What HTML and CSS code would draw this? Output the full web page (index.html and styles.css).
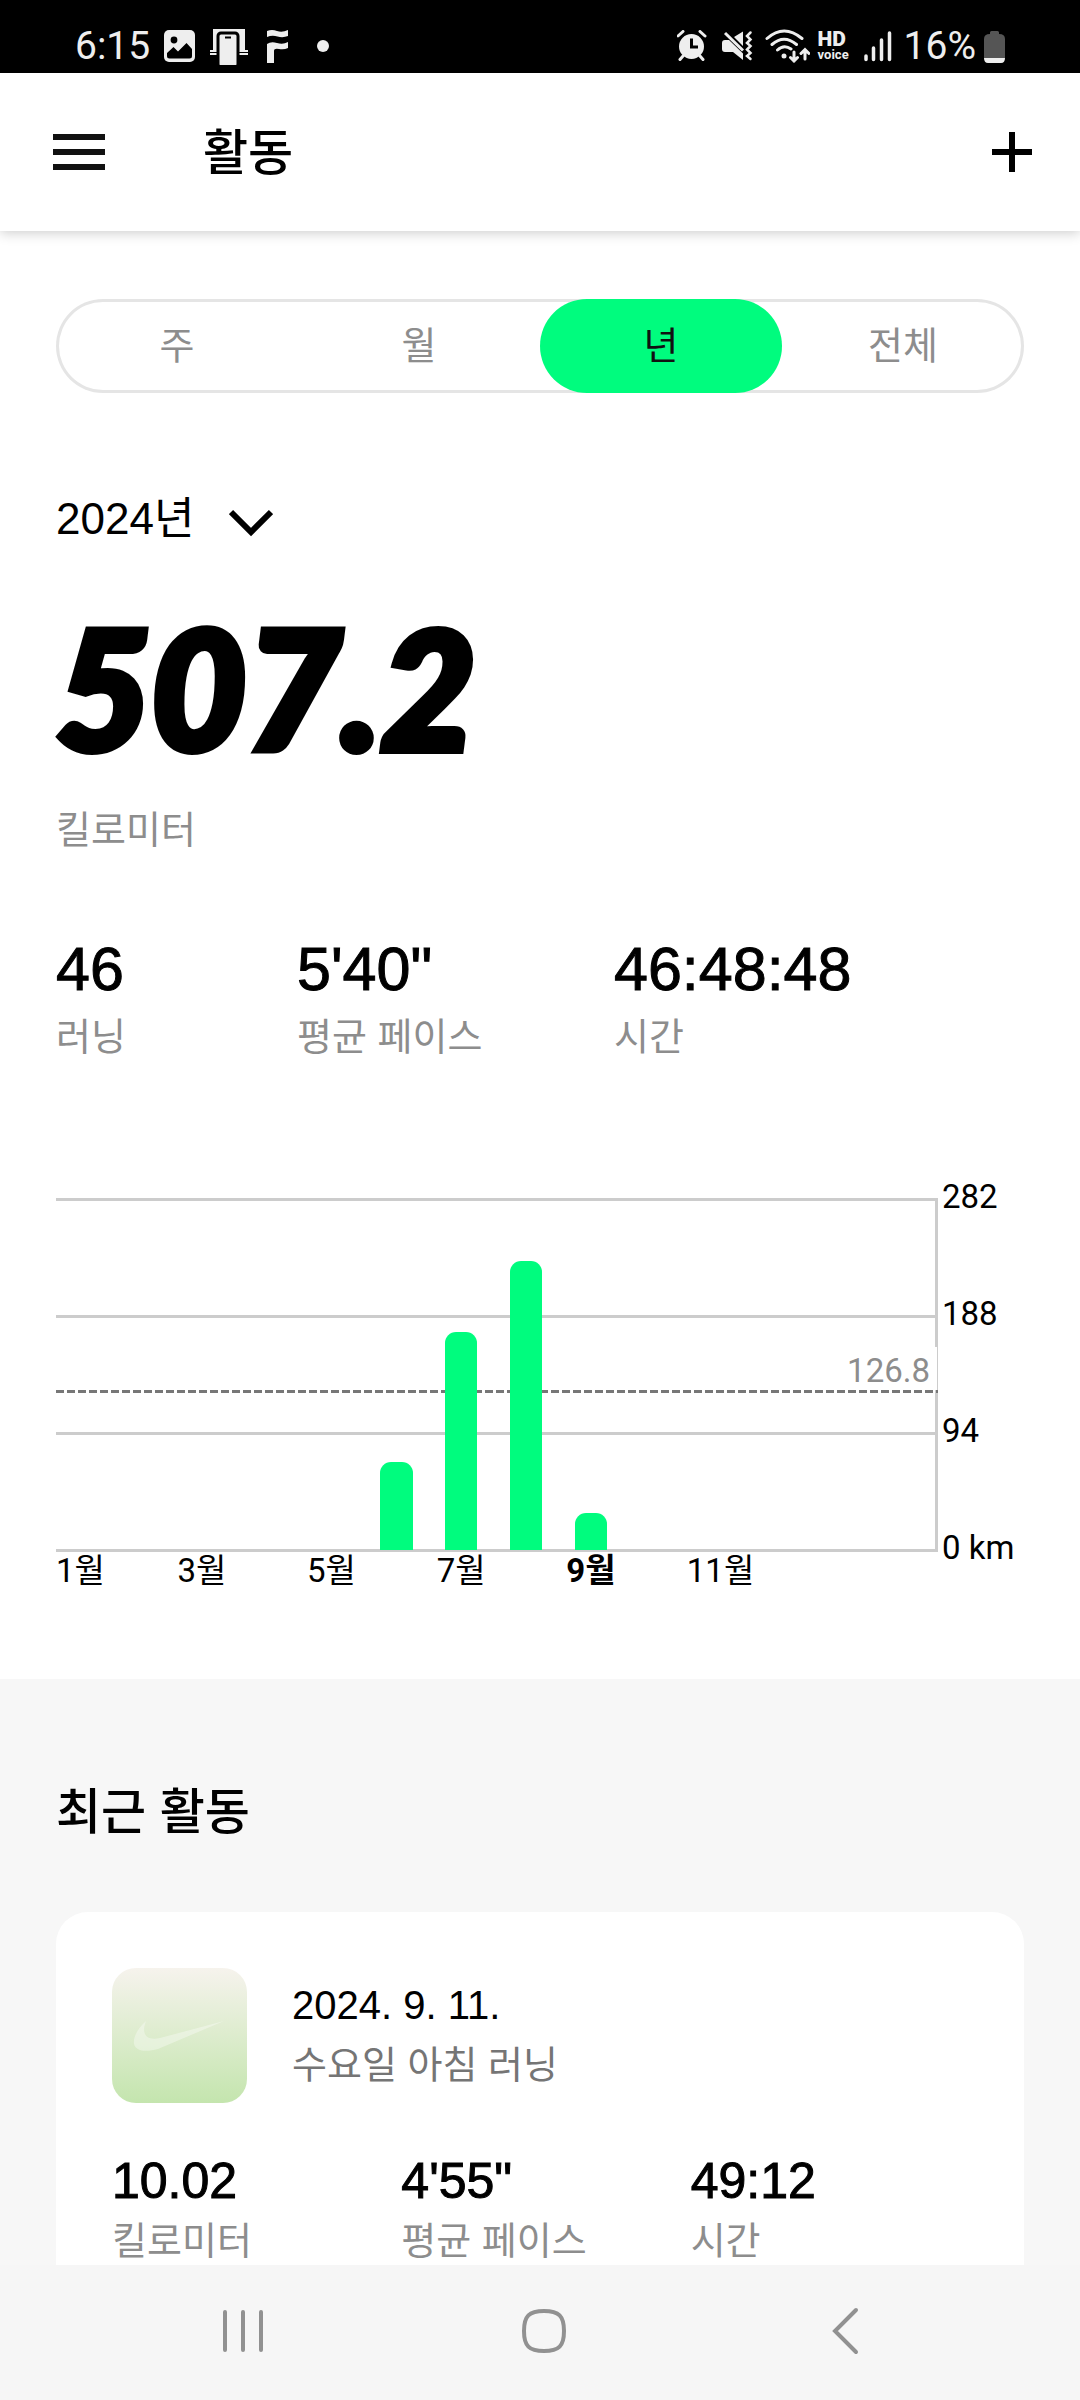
FILE: index.html
```html
<!DOCTYPE html>
<html lang="ko">
<head>
    <meta charset="UTF-8">
    <meta name="viewport" content="width=device-width, initial-scale=1.0">
    <title>활동</title>
    <link rel="stylesheet" href="styles.css">
</head>
<body>
<div class="status-bar">
    <div class="status-left">
        <span class="status-text">6:15</span>
        <svg width="31" height="32" viewBox="0 0 31 32">
            <rect width="31" height="32" rx="5" fill="#eee"/>
            <circle cx="10" cy="10" r="3.4" fill="#000"/>
            <path d="M3 23 L9.500 17 L14 21.500 L22.500 13 L28 19 V26 Q28 28.500 25.500 28.500 H5.500 Q3 28.500 3 26 Z" fill="#000"/>
        </svg>
        <svg width="40" height="37" viewBox="0 0 40 37">
            <path d="M4 1 H36 V22 H39 V27 H1 V22 H4 Z" fill="#eee"/>
            <path d="M1 24.500 H39" stroke="#000" stroke-width="1"/>
            <rect x="9" y="5" width="20" height="34" rx="3" fill="#eee" stroke="#000" stroke-width="3"/>
            <path d="M16 9.500 H22" stroke="#000" stroke-width="2"/>
        </svg>
        <svg width="26" height="35" viewBox="0 0 26 35">
            <path d="M4 2 Q9 0 14 2 T25 1 V7 Q20 9 14.500 7.500 T4 8 Z M4 15 Q8 12 14 14 T25 13 V19 Q21 21 16 20 Q11 19 11 22 V34 H4 Z" fill="#eee"/>
        </svg>
        <span class="dot"></span>
    </div>
    <div class="status-right">
        <svg width="37" height="32" viewBox="0 0 37 32">
            <circle cx="14.500" cy="16.500" r="12.500" fill="#eee"/>
            <path d="M1 6 L6 1.500 M28 6 L23 1.500 M6 26 L3 29.500 M23 26 L26 29.500" stroke="#eee" stroke-width="3" stroke-linecap="round"/>
            <path d="M14.500 8.500 V17 H21" fill="none" stroke="#000" stroke-width="3"/>
        </svg>
        <svg width="35" height="32" viewBox="0 0 35 32">
            <path d="M0 13 Q0 10 3 10 H7 L21 23.500 V30 L11 22 H3 Q0 22 0 19 Z M12 7 L21 1.500 V16 Z" fill="#eee"/>
            <path d="M3 3 L21 20.500" stroke="#eee" stroke-width="3"/>
            <path d="M28.500 2.500 L25 6 L28.500 9.500 L25 13 L28.500 16 L25 19.500 L28.500 23 L25 26 L28.500 29" fill="none" stroke="#eee" stroke-width="2.500" stroke-linecap="round"/>
        </svg>
        <svg width="45" height="34" viewBox="0 0 45 34">
            <g fill="none" stroke="#eee" stroke-width="3" stroke-linecap="round">
                <path d="M2 9.500 Q19 -5.500 37 9.500 M7 15.500 Q19 5 31.500 15.500 M12.500 21 Q19 15 26 20"/>
                <path d="M29 23 V32 M25.500 28.500 L29 32 L32.500 28.500 M40 30 V20.500 M36 24.500 L40 20.500 L44 24.500"/>
            </g>
            <circle cx="19" cy="27" r="2.500" fill="#eee"/>
        </svg>
        <span class="hd"><b>HD</b><small>voice</small></span>
        <svg width="32" height="32" viewBox="0 0 32 32">
            <path d="M2 26 V29.500 M9.500 18 V29.500 M17.500 10 V29.500 M25.500 3 V29.500" stroke="#eee" stroke-width="3.500" stroke-linecap="round"/>
        </svg>
        <span class="status-text">16%</span>
        <svg width="21" height="33" viewBox="0 0 21 33">
            <path d="M6 4 V2.500 Q6 1 7.500 1 H13.500 Q15 1 15 2.500 V4 Q21 4 21 9 V28 H0 V9 Q0 4 6 4 Z" fill="#555"/>
            <path d="M0 28 H21 Q21 33 17 33 H4 Q0 33 0 28 Z" fill="#eee"/>
        </svg>
    </div>
</div>

<header class="app-bar">
    <button class="icon-btn" aria-label="메뉴">
        <svg width="52" height="36" viewBox="0 0 52 36">
            <path d="M0 3 H52 M0 18 H52 M0 33 H52" stroke="#111" stroke-width="6"/>
        </svg>
    </button>
    <h1>활동</h1>
    <button class="icon-btn add" aria-label="추가">
        <svg width="40" height="40" viewBox="0 0 40 40">
            <path d="M20 0 V40 M0 20 H40" stroke="#000" stroke-width="6"/>
        </svg>
    </button>
</header>

<main>
    <section class="summary">
        <div class="tabs">
            <button>주</button>
            <button>월</button>
            <button class="active">년</button>
            <button>전체</button>
        </div>

        <div class="year">
            <select id="year" aria-label="연도">
                <option>2024년</option>
            </select>
            <svg width="44" height="36" viewBox="0 0 44 36">
                <path d="M2 11 L22 31 L42 11" fill="none" stroke="#000" stroke-width="6"/>
            </svg>
        </div>

        <div class="total">507.2</div>
        <div class="label">킬로미터</div>

        <div class="stats">
            <div><div class="value">46</div><div class="label">러닝</div></div>
            <div><div class="value">5'40"</div><div class="label">평균 페이스</div></div>
            <div><div class="value">46:48:48</div><div class="label">시간</div></div>
        </div>

        <div class="chart">
            <div class="plot">
                <div class="lines"><i></i><i></i><i></i><i></i></div>
                <div class="average"><span>126.8</span></div>
                <div class="bars">
                    <i></i><i></i><i></i><i></i><i></i>
                    <i style="height: 25%"></i>
                    <i style="height: 62%"></i>
                    <i style="height: 82%"></i>
                    <i style="height: 10.500%"></i>
                    <i></i><i></i><i></i>
                </div>
            </div>
            <div class="scale">
                <span>282</span>
                <span>188</span>
                <span>94</span>
                <span>0 km</span>
            </div>
            <div class="months">
                <span class="first">1월</span>
                <span>3월</span>
                <span>5월</span>
                <span>7월</span>
                <span class="now">9월</span>
                <span>11월</span>
            </div>
        </div>
    </section>

    <section class="recent">
        <h2>최근 활동</h2>
        <div class="card">
            <div class="run">
                <svg class="thumb" width="135" height="135" viewBox="0 0 135 135">
                    <path d="M34 53 C25 61 21 70 22 76 C24 84 35 84 46 81 L112 53 L48 70 C34 73 29 66 34 53 Z" fill="#fff" fill-opacity="0.35"/>
                </svg>
                <div>
                    <div class="date">2024. 9. 11.</div>
                    <div class="name">수요일 아침 러닝</div>
                </div>
            </div>
            <div class="run-stats">
                <div><div class="value">10.02</div><div class="label">킬로미터</div></div>
                <div><div class="value">4'55"</div><div class="label">평균 페이스</div></div>
                <div><div class="value">49:12</div><div class="label">시간</div></div>
            </div>
        </div>
    </section>
</main>

<nav class="nav-bar">
    <button class="icon-btn" aria-label="최근 앱">
        <svg width="44" height="48" viewBox="0 0 44 48">
            <path d="M4 5 V43 M22 5 V43 M40 5 V43" stroke="#919191" stroke-width="4" stroke-linecap="round"/>
        </svg>
    </button>
    <button class="icon-btn" aria-label="홈">
        <svg width="48" height="48" viewBox="0 0 48 48">
            <path d="M24 4 C39 4 44 9 44 24 C44 39 39 44 24 44 C9 44 4 39 4 24 C4 9 9 4 24 4 Z" fill="none" stroke="#919191" stroke-width="4"/>
        </svg>
    </button>
    <button class="icon-btn" aria-label="뒤로">
        <svg width="28" height="48" viewBox="0 0 28 48">
            <path d="M25 3 L4 24 L25 45" fill="none" stroke="#919191" stroke-width="4" stroke-linecap="round"/>
        </svg>
    </button>
</nav>
</body>
</html>
```

FILE: styles.css
```css
* {
    box-sizing: border-box;
}

body {
    margin: 0;
    height: 100vh;
    display: flex;
    flex-direction: column;
    background-color: #fff;
    color: #000;
    font-family: "Liberation Sans", "Noto Sans CJK KR", sans-serif;
}

button, select {
    border: 0;
    padding: 0;
    background: none;
    color: inherit;
    font-family: inherit;
}

h1, h2 {
    margin: 0;
    font-size: 49px;
    line-height: 64px;
    font-weight: 500;
}

svg {
    display: block;
    flex: none;
}

/* Status bar */
.status-bar {
    display: flex;
    justify-content: space-between;
    height: 73px;
    padding: 18px 75px 0;
    background-color: #000;
    color: #eee;
    font-family: Roboto, sans-serif;
}

.status-left, .status-right {
    display: flex;
    align-items: center;
    height: 56px;
    gap: 8px;
}

.status-left {
    gap: 14px;
}

.status-text {
    font-size: 39px;
    line-height: 48px;
}

.dot {
    width: 12px;
    height: 12px;
    margin-left: 14px;
    border-radius: 50%;
    background-color: #eee;
}

.hd {
    width: 38px;
}

.hd b, .hd small {
    display: block;
    font-weight: 900;
    font-size: 21px;
    line-height: 18px;
}

.hd small {
    font-weight: 700;
    font-size: 13px;
    line-height: 14px;
}

/* App bar */
.app-bar {
    display: flex;
    align-items: center;
    flex: none;
    height: 158px;
    padding: 0 48px 0 53px;
    box-shadow: 0 2px 12px rgba(0, 0, 0, 0.2);
    z-index: 1;
}

.app-bar h1 {
    margin-left: 98px;
    padding-top: 2px;
}

.add {
    margin-left: auto;
}

main {
    flex: 1;
    min-height: 0;
    overflow: hidden;
}

.summary {
    padding: 68px 56px 89px;
}

/* Week / month / year / all */
.tabs {
    display: grid;
    grid-template-columns: repeat(4, 1fr);
    height: 94px;
    border-radius: 47px;
    box-shadow: inset 0 0 0 3px #e5e5e5;
}

.tabs button {
    padding-bottom: 8px;
    border-radius: 47px;
    color: #8d8d8d;
    font-size: 38px;
}

.tabs .active {
    background-color: #00fc7e;
    color: #111;
}

.year {
    display: flex;
    align-items: center;
    gap: 34px;
    margin-top: 94px;
}

.year select {
    appearance: none;
    font-size: 44px;
    line-height: 64px;
    height: 64px;
}

.total {
    margin-top: 46px;
    font-family: "Lato", sans-serif;
    font-size: 164px;
    line-height: 180px;
    font-weight: 900;
    font-style: italic;
    -webkit-text-stroke: 8px #000;
}

.total + .label {
    margin-top: 29px;
}

.label {
    color: #8d8d8d;
    font-size: 38px;
    line-height: 48px;
}

.stats {
    display: grid;
    grid-template-columns: 241fr 317fr 410fr;
    margin-top: 77px;
}

.value {
    font-size: 61px;
    line-height: 76px;
    -webkit-text-stroke: 1px #000;
}

.stats .value {
    margin-bottom: 6px;
}

/* Chart */
.chart {
    display: grid;
    grid-template-columns: 1fr 82px;
    column-gap: 4px;
    margin-top: 137px;
    font-family: Roboto, "Noto Sans CJK KR", sans-serif;
    font-size: 33px;
    line-height: 40px;
}

.plot {
    display: grid;
    height: 354px;
    border-right: 3px solid #ccc;
}

.plot > div {
    grid-area: 1 / 1;
}

.lines {
    display: flex;
    flex-direction: column;
    justify-content: space-between;
}

.lines i {
    height: 3px;
    background-color: #ccc;
}

.average {
    align-self: start;
    display: flex;
    justify-content: flex-end;
    height: 46px;
    margin: 149px -3px 0 0;
    color: #8d8d8d;
    background: repeating-linear-gradient(90deg, #777 0 8px, transparent 8px 11px) bottom / 100% 3px no-repeat;
}

.average span {
    height: 43px;
    padding: 4px 7px 0 0;
    margin-right: 1px;
    background-color: #fff;
}

.bars {
    display: grid;
    grid-template-columns: repeat(12, 1fr);
    align-items: end;
    margin-right: 101px;
    padding-bottom: 2px;
    z-index: 1;
}

.bars i {
    width: 50%;
    border-radius: 11px 11px 0 0;
    background-color: #00fc7e;
}

.scale {
    display: flex;
    flex-direction: column;
    justify-content: space-between;
    margin: -21px 0 -16px;
    white-space: nowrap;
}

.months {
    display: grid;
    grid-template-columns: repeat(6, 1fr);
    margin-right: 104px;
    line-height: 38px;
}

.months span {
    width: 25%;
    display: flex;
    justify-content: center;
    white-space: nowrap;
}

.months .first {
    justify-content: flex-start;
}

.now {
    font-weight: 700;
}

/* Recent runs */
.recent {
    padding: 101px 56px;
    background-color: #f7f7f7;
}

.card {
    margin-top: 68px;
    padding: 56px 44px 96px 56px;
    border-radius: 32px;
    background-color: #fff;
}

.run {
    display: flex;
    align-items: center;
    gap: 45px;
}

.run > div {
    padding-bottom: 2px;
}

.thumb {
    border-radius: 24px;
    background: linear-gradient(#f6f3ed, #c4e5ae);
}

.date {
    font-size: 40px;
    line-height: 60px;
}

.name {
    color: #757575;
    font-size: 38px;
    line-height: 60px;
}

.run-stats {
    display: grid;
    grid-template-columns: repeat(3, 1fr);
    margin-top: 44px;
}

.run-stats .value {
    margin-bottom: 2px;
    font-size: 50px;
    line-height: 68px;
}

/* System navigation */
.nav-bar {
    display: grid;
    grid-template-columns: repeat(3, 1fr);
    place-items: center;
    flex: none;
    height: 135px;
    padding: 0 84px 4px 92px;
    background-color: #f6f6f6;
}
```
